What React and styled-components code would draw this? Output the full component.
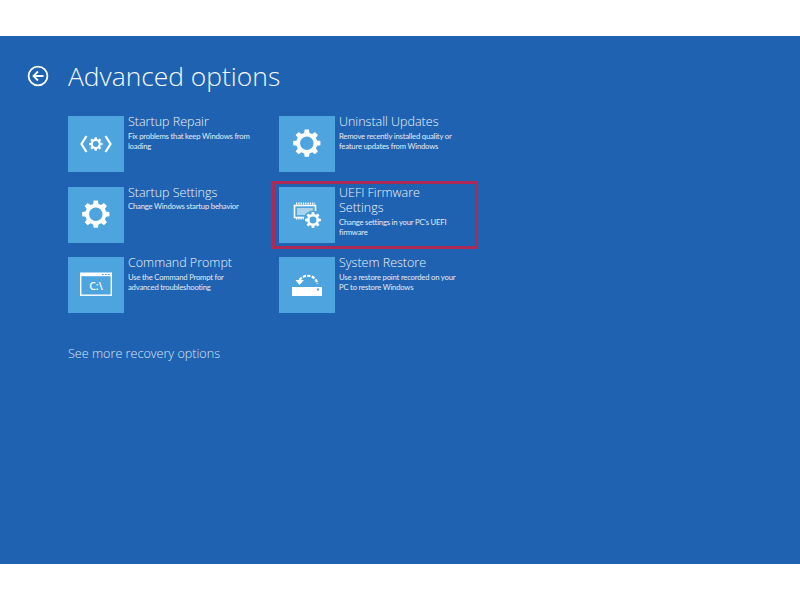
import React from 'react';
import styled, { createGlobalStyle } from 'styled-components';

const Global = createGlobalStyle`
    html, body {
        margin: 0;
        background: #fff;
    }
`

const Page = styled.div`
    width: 800px;
    height: 600px;
    padding: 36px 0;
    box-sizing: border-box;
    overflow: hidden;
`

const Screen = styled.div`
    height: 528px;
    padding: 22px 0 0 68px;
    box-sizing: border-box;
    background: #1f62b1;
    color: #fff;
    font-family: "Open Sans", "Liberation Sans", sans-serif;
    font-weight: 300;
`

const Header = styled.div`
    position: relative;
    height: 36px;
    margin-bottom: 22px;
`

const Title = styled.h1`
    margin: 0;
    font-size: 26.4px;
    line-height: 36px;
    font-weight: 300;
    color: #f6f9fc;
`

const BackButton = styled.svg`
    position: absolute;
    left: -41px;
    top: 7px;
    width: 22px;
    height: 22px;
`

const Grid = styled.div`
    display: grid;
    grid-template-columns: 211px 211px;
    grid-auto-rows: 70.5px;
`

const Option = styled.div`
    position: relative;
    display: flex;
    gap: 4px;
    width: 196px;
`

const Highlight = styled.div`
    position: absolute;
    left: -7px;
    top: -6px;
    width: 206px;
    height: 68px;
    box-sizing: border-box;
    border: 3px solid #ad2a57;
`

const Tile = styled.div`
    flex: none;
    width: 56px;
    height: 56px;
    background: #4ea4de;
    display: flex;
    align-items: center;
    justify-content: center;
`

const Info = styled.div`
    display: flex;
    flex-direction: column;
    width: 125px;
`

const Name = styled.div`
    font-size: 12.5px;
    line-height: 15.5px;
    margin-top: -2px;
    color: #eef4fa;
`

const Desc = styled.div`
    font-family: Lato, "Open Sans", sans-serif;
    font-size: 7.7px;
    letter-spacing: -0.2px;
    line-height: 10.5px;
    margin-top: 1px;
    font-weight: 400;
    color: #e2edf7;
`

const MoreLink = styled.div`
    margin-top: 17px;
    font-size: 12.6px;
    line-height: 17px;
    color: #d8e5f3;
`

const gearPath = (cx, cy, outer, inner, teeth) => {
    const step = (Math.PI * 2) / teeth
    let d = ''
    for (let i = 0; i < teeth; i++) {
        const a = i * step - Math.PI / 2
        const pts = [
            [a - step * 0.2, outer],
            [a + step * 0.2, outer],
            [a + step * 0.32, inner],
            [a + step * 0.68, inner],
        ]
        pts.forEach(([ang, r], j) => {
            const x = (cx + Math.cos(ang) * r).toFixed(2)
            const y = (cy + Math.sin(ang) * r).toFixed(2)
            d += `${i === 0 && j === 0 ? 'M' : 'L'}${x} ${y} `
        })
    }
    return d + 'Z'
}

const Gear = ({cx = 27.8, cy = 27.2, outer = 13.8, inner = 10.6, hole = 6.7, teeth = 8}) => (
    <>
        <path d={gearPath(cx, cy, outer, inner, teeth)} fill="#fff"/>
        <circle cx={cx} cy={cy} r={hole} fill="#4ea4de"/>
    </>
)

const Art = styled.svg`
    width: 56px;
    height: 56px;
    display: block;
`

const RepairIcon = () => (
    <Art viewBox="0 0 56 56">
        <Gear cy={28} outer={6.8} inner={5.1} hole={2.9}/>
        <path d="M18.5 20 L13.5 28 L18.5 36 M37.5 20 L42.5 28 L37.5 36" fill="none" stroke="#fff" strokeWidth="2.2"/>
    </Art>
)

const GearIcon = () => (
    <Art viewBox="0 0 56 56">
        <Gear/>
    </Art>
)

const ConsoleIcon = () => (
    <Art viewBox="0 0 56 56">
        <rect x="12.7" y="16.2" width="30.6" height="22" fill="none" stroke="#fff" strokeWidth="1.4"/>
        <rect x="12.7" y="16" width="30.6" height="3.2" fill="#fff"/>
        <path d="M34 17.5 h1.5 M37 17.5 h1.5 M40 17.5 h1.5" stroke="#4ea4de" strokeWidth="1.2"/>
        <text x="28" y="32.5" textAnchor="middle" fontFamily="Open Sans, sans-serif" fontWeight="600" fontSize="10.5" fill="#fff">C:\</text>
    </Art>
)

const FirmwareIcon = () => (
    <Art viewBox="0 0 56 56">
        <path d="M17 16.5 H36 M17 31.5 H27" stroke="#fff" strokeWidth="2" strokeDasharray="1.3 1"/>
        <rect x="15.5" y="18.5" width="21" height="12" fill="#4ea4de" stroke="#fff" strokeWidth="1.6"/>
        <rect x="18" y="21" width="16" height="7" fill="#a9d3ef"/>
        <circle cx="34" cy="33" r="9.5" fill="#4ea4de"/>
        <Gear cx={34} cy={33} outer={8} inner={6} hole={3.4}/>
    </Art>
)

const RestoreIcon = () => (
    <Art viewBox="0 0 56 56">
        <path d="M20.5 23 A10 10 0 0 1 38.5 27" fill="none" stroke="#fff" strokeWidth="2.2" strokeDasharray="3.2 1.3"/>
        <path d="M16.5 23 H25 L20.5 28 Z" fill="#fff"/>
        <path d="M13 30 H43 V39 H13 Z" fill="#fff"/>
        <rect x="38" y="31.5" width="2" height="2" fill="#4ea4de"/>
    </Art>
)

const options = [
    {icon: RepairIcon, name: 'Startup Repair', desc: 'Fix problems that keep Windows from loading'},
    {icon: GearIcon, name: 'Uninstall Updates', desc: 'Remove recently installed quality or feature updates from Windows'},
    {icon: GearIcon, name: 'Startup Settings', desc: 'Change Windows startup behavior'},
    {icon: FirmwareIcon, name: 'UEFI Firmware Settings', desc: "Change settings in your PC's UEFI firmware", selected: true},
    {icon: ConsoleIcon, name: 'Command Prompt', desc: 'Use the Command Prompt for advanced troubleshooting'},
    {icon: RestoreIcon, name: 'System Restore', desc: 'Use a restore point recorded on your PC to restore Windows'},
]

export default function App() {
    return (
        <Page>
            <Global/>
            <Screen>
                <Header>
                    <BackButton viewBox="0 0 22 22">
                        <circle cx="11" cy="11" r="9.4" fill="none" stroke="#fff" strokeWidth="1.8"/>
                        <path d="M11 6.5 L6.5 11 L11 15.5 M6.8 11 H16.5" fill="none" stroke="#fff" strokeWidth="1.8"/>
                    </BackButton>
                    <Title>Advanced options</Title>
                </Header>
                <Grid>
                    {options.map(({icon: Icon, name, desc, selected}) => (
                        <Option key={name}>
                            {selected && <Highlight/>}
                            <Tile><Icon/></Tile>
                            <Info>
                                <Name>{name}</Name>
                                <Desc>{desc}</Desc>
                            </Info>
                        </Option>
                    ))}
                </Grid>
                <MoreLink>See more recovery options</MoreLink>
            </Screen>
        </Page>
    );
}
